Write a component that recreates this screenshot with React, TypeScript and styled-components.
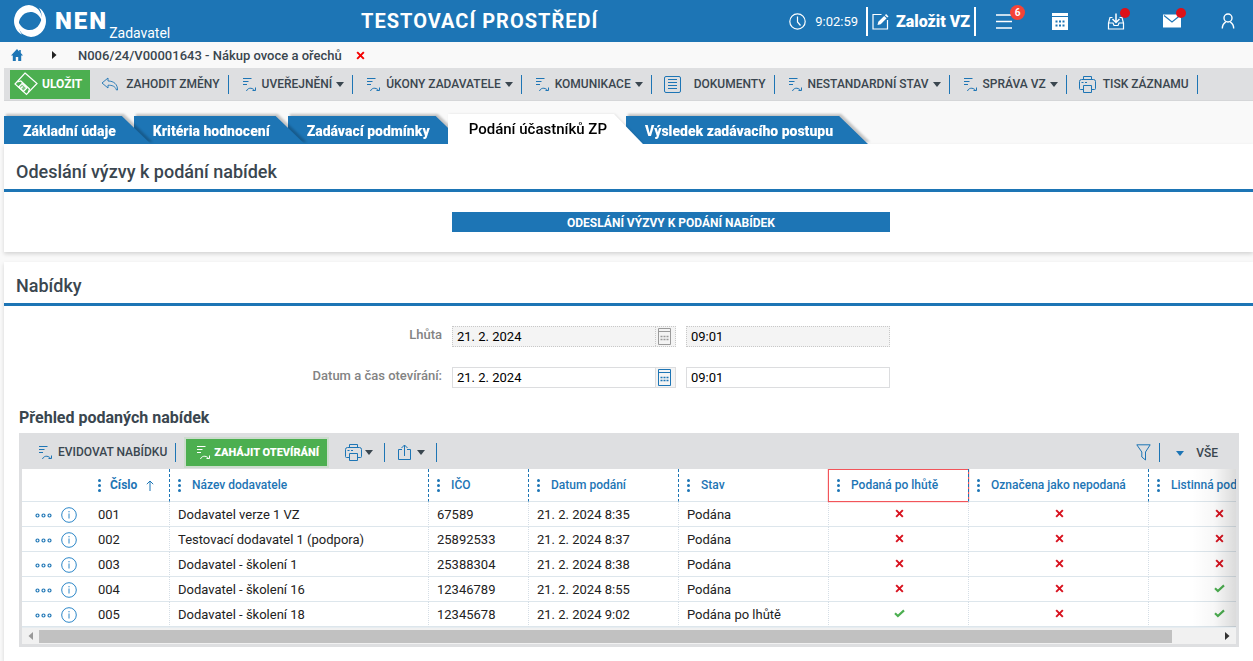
import React from 'react';
import styled, { createGlobalStyle, css } from 'styled-components';

const blue = '#1d75b5';
const ink = '#3a464f';
const green = '#4caf50';

const GlobalStyle = createGlobalStyle`
  * { box-sizing: border-box; }
  body {
    margin: 0;
    background: #f9f9f9;
    color: #222;
    font-family: Roboto, "Liberation Sans", sans-serif;
    font-size: 13px;
  }
  button, input { font-family: inherit; }
  button { border: 0; padding: 0; background: none; cursor: pointer; }
  svg { display: block; flex: none; }
`;

/* ---------- icons ---------- */

const LogoIcon = () => (
  <svg width="32" height="32" viewBox="0 0 32 32" aria-hidden="true">
    <path d="M15 0A15 16 0 0 0 .5 20C2 25 5 28.500 8 29.500 4.500 25 3.500 18 6.500 13 9 8.500 13 6.500 18 7 23 8 27 12 28 17 29 11 26 5 22 2.500A15 15 0 0 0 15 0Z" fill="#fff" />
    <path d="M17 32A15 16 0 0 0 31.500 12C30 7 28 4.500 25 3 28.500 8 28.500 14 25.500 19 23 23.500 19 25.500 14 25 9 24 5 20 4 15 3 21 5.500 27 10 29.800A15 15 0 0 0 17 32Z" fill="#fff" />
  </svg>
);

const ClockIcon = () => (
  <svg width="17" height="17" viewBox="0 0 17 17" fill="none" stroke="#fff" strokeWidth="1.200" aria-hidden="true">
    <circle cx="8.500" cy="8.500" r="7.700" />
    <path d="M8.500 3.500v5.500l3 3.500" />
  </svg>
);

const ComposeIcon = () => (
  <svg width="17" height="17" viewBox="0 0 17 17" fill="none" stroke="#fff" aria-hidden="true">
    <path d="M9.500 1.500H1v14.500h14.500V7" strokeWidth="1.200" />
    <path d="M5.500 12l.8-3.200 5.900-5.900 2.400 2.400-5.900 5.900z" fill="#fff" stroke="none" />
    <path d="M12.900 2.200l1.200-1.200 2.400 2.400-1.200 1.200z" fill="#fff" stroke="none" />
  </svg>
);

const MenuIcon = () => (
  <svg width="18" height="16" viewBox="0 0 18 16" stroke="#fff" strokeWidth="1.500" aria-hidden="true">
    <path d="M1 2h16M1 8.500h16M1 15h16" />
  </svg>
);

const CalendarSolidIcon = () => (
  <svg width="18" height="17" viewBox="0 0 18 17" aria-hidden="true">
    <path d="M1 0h16v3H1zM1 4h16v13H1z" fill="#fff" />
    <path d="M4.500 8.500h2M8 8.500h2M11.500 8.500h2M4.500 12.500h2M8 12.500h2M11.500 12.500h2" stroke={blue} strokeWidth="2" />
  </svg>
);

const InboxIcon = () => (
  <svg width="18" height="18" viewBox="0 0 18 18" fill="none" stroke="#fff" strokeWidth="1.200" aria-hidden="true">
    <path d="M5.500 5.500H3L1.500 11v6h15v-6L15 5.500h-2.500M1.500 11h4.500l1 2.500h4l1-2.500h4.500" />
    <path d="M9 1.500v9M5.500 7l3.500 3.500L12.500 7" strokeWidth="1.500" />
  </svg>
);

const MailIcon = () => (
  <svg width="18" height="14" viewBox="0 0 18 14" aria-hidden="true">
    <path d="M0 .5h18V13.500H0z" fill="#fff" />
    <path d="M1 1.500l8 6.500 8-6.500" fill="none" stroke={blue} strokeWidth="1.100" />
  </svg>
);

const UserIcon = () => (
  <svg width="16" height="16" viewBox="0 0 16 16" fill="none" stroke="#fff" strokeWidth="1.400" aria-hidden="true">
    <circle cx="8" cy="5" r="4" />
    <path d="M2.300 15.500c0-3 1.300-5.200 3.500-6.700M13.700 15.500c0-3-1.300-5.200-3.500-6.700" />
  </svg>
);

const HomeIcon = () => (
  <svg width="12" height="12" viewBox="0 0 12 12" fill={blue} aria-hidden="true">
    <path d="M6 0L0 6.500h1.800V12h3V8h2.400v4h3V6.500H12L9.800 4V1H8.200v1.400z" />
  </svg>
);

const CrossIcon = ({ color = '#d8121f', size = 9, label }: { color?: string; size?: number; label?: string }) => (
  <svg width={size} height={size} viewBox="0 0 10 10" stroke={color} strokeWidth="2.200" role="img" aria-label={label}>
    <path d="M1.300 1.300l7.400 7.400M8.700 1.300l-7.400 7.400" />
  </svg>
);

const CheckIcon = () => (
  <svg width="11" height="9" viewBox="0 0 12 10" fill="none" stroke={green} strokeWidth="2.400" role="img" aria-label="Ano">
    <path d="M1 4.800l3.200 3L11 1.500" />
  </svg>
);

const SaveTagIcon = () => (
  <svg width="24" height="24" viewBox="0 0 24 24" fill="none" stroke="#fff" strokeWidth="1.200" aria-hidden="true">
    <path d="M11 1L23 11.500 12.500 22.500 1 12z" />
    <path d="M3.500 9.800l3.300-.8 8.700 8-1.200 3.500" />
    <path d="M8 11.500l4.800 4.500-3.300 3.500-4.900-4.500z" fill="#fff" fillOpacity=".3" />
    <path d="M8.700 14.500l-2 2" />
  </svg>
);

const UndoIcon = () => (
  <svg width="18" height="14" viewBox="0 0 18 14" fill="none" stroke={blue} strokeWidth=".9" aria-hidden="true">
    <path d="M7 1L1 6l6 5V8.200c4 0 7.200.8 8.500 4.800h1c.2-5.500-3.500-9-9.500-9z" />
  </svg>
);

const ListActionIcon = ({ color = blue }: { color?: string }) => (
  <svg width="15" height="15" viewBox="0 0 15 15" fill="none" stroke={color} aria-hidden="true">
    <path d="M1 1.500h8.500M1 4.500h5.500M1 7.500h4" />
    <path d="M4.500 14c1-3 5-4 8-.8M13.500 10.500v3H10.500" />
  </svg>
);

const DocumentIcon = () => (
  <svg width="17" height="17" viewBox="0 0 17 17" fill="none" stroke={blue} aria-hidden="true">
    <rect x=".5" y=".5" width="16" height="16" rx="1.500" />
    <path d="M4 3.500h9M4 6.500h9M4 9.500h9M4 12.500h9" />
  </svg>
);

const PrintIcon = () => (
  <svg width="17" height="17" viewBox="0 0 17 17" fill="none" stroke={blue} aria-hidden="true">
    <path d="M4.500 3.500v-3h8v3M4.500 13.500H1.500q-1 0-1-1v-7q0-2 2-2h12q2 0 2 2v7q0 1-1 1h-3" />
    <path d="M4.500 9.500h8v7h-8z" />
    <path d="M2.500 6.500h2M6 6.500h2" />
  </svg>
);

const ShareIcon = () => (
  <svg width="15" height="16" viewBox="0 0 15 16" fill="none" stroke={blue} aria-hidden="true">
    <path d="M5 5.500H1.500v10h12v-10h-3.500M7.500 12V1M4.500 4l3-3 3 3" />
  </svg>
);

const FilterIcon = () => (
  <svg width="15" height="17" viewBox="0 0 15 17" fill="none" stroke={blue} aria-hidden="true">
    <path d="M.8.8h13.400L9.500 8v8L5.800 13V8z" />
  </svg>
);

const CaretIcon = ({ color = ink }: { color?: string }) => (
  <svg width="8" height="5" viewBox="0 0 8 5" fill={color} aria-hidden="true">
    <path d="M0 0h8L4 5z" />
  </svg>
);

const PointerIcon = ({ left, color = '#333' }: { left?: boolean; color?: string }) => (
  <svg width="5" height="8" viewBox="0 0 5 8" fill={color} aria-hidden="true">
    <path d={left ? 'M5 0v8L.5 4z' : 'M0 0v8l4.500-4z'} />
  </svg>
);

const CalendarIcon = ({ color }: { color: string }) => (
  <svg width="15" height="17" viewBox="0 0 15 17" fill="none" stroke={color} aria-hidden="true">
    <path d="M1.500 .5v16h12V.5zM1 3.500h13" />
    <path d="M3.500 8.500h2M6.500 8.500h2M9.500 8.500h2M3.500 11.500h2M6.500 11.500h2M9.500 11.500h2" strokeWidth="1.500" />
  </svg>
);

const DotsIcon = () => (
  <svg width="3" height="13" viewBox="0 0 3 13" fill={blue} aria-hidden="true">
    <circle cx="1.500" cy="1.500" r="1.500" />
    <circle cx="1.500" cy="6.500" r="1.500" />
    <circle cx="1.500" cy="11.500" r="1.500" />
  </svg>
);

const RowMenuIcon = () => (
  <svg width="17" height="5" viewBox="0 0 17 5" fill="none" stroke={blue} strokeWidth="1.200" aria-hidden="true">
    <circle cx="2.500" cy="2.500" r="1.500" />
    <circle cx="8.500" cy="2.500" r="1.500" />
    <circle cx="14.500" cy="2.500" r="1.500" />
  </svg>
);

const InfoIcon = () => (
  <svg width="16" height="16" viewBox="0 0 16 16" fill="none" stroke="#2b86c8" aria-hidden="true">
    <circle cx="8" cy="8" r="7.300" />
    <path d="M8 6.500v5M8 4v1.300" />
  </svg>
);

const SortIcon = () => (
  <svg width="8" height="11" viewBox="0 0 8 11" fill="none" stroke={blue} aria-hidden="true">
    <path d="M4 11V1M.8 4.200L4 1l3.200 3.200" />
  </svg>
);

/* ---------- page header ---------- */

const Header = styled.header`
  display: flex;
  align-items: center;
  height: 42px;
  padding: 0 9px 0 14px;
  background: ${blue};
  color: #fff;
`;

const Brand = styled.a`
  display: flex;
  align-items: center;
  height: 42px;
  color: inherit;
  text-decoration: none;
`;

const BrandName = styled.span`
  margin-left: 9px;
  font-size: 24px;
  line-height: 40px;
  font-weight: 900;
  letter-spacing: 2px;
`;

const BrandRole = styled.span`
  align-self: flex-end;
  margin-left: 1px;
  font-size: 14px;
  line-height: 18px;
`;

const EnvTitle = styled.h1`
  flex: 1;
  margin: 0;
  font-size: 20px;
  line-height: 40px;
  font-weight: 700;
  letter-spacing: 1px;
  text-align: center;
  white-space: nowrap;
`;

const Clock = styled.time`
  display: flex;
  align-items: center;
  gap: 9px;
  margin-right: 8px;
  font-size: 13px;
`;

const CreateButton = styled.button`
  display: flex;
  align-items: center;
  gap: 7px;
  height: 29px;
  padding: 0 4px;
  border: solid #fff;
  border-width: 0 2px;
  color: #fff;
  font-size: 16px;
  font-weight: 900;
  white-space: nowrap;
`;

const HeaderNav = styled.nav`
  display: flex;
  gap: 24px;
  margin-left: 12px;
`;

const HeaderIconButton = styled.button`
  position: relative;
  display: grid;
  place-items: center;
  width: 32px;
  height: 32px;
`;

const CountBadge = styled.span`
  position: absolute;
  top: 0;
  right: -5px;
  width: 15px;
  height: 15px;
  border-radius: 50%;
  background: #f44336;
  color: #fff;
  font-size: 10px;
  line-height: 15px;
  font-weight: 700;
  text-align: center;
`;

const DotBadge = styled.span`
  position: absolute;
  top: 3px;
  right: 2px;
  width: 10px;
  height: 10px;
  border-radius: 50%;
  background: #dd1119;
`;

/* ---------- breadcrumb ---------- */

const Breadcrumb = styled.nav`
  display: flex;
  align-items: center;
  height: 26px;
  padding-left: 11px;
  color: ${ink};
  font-size: 13px;
  font-weight: 500;
`;

const HomeLink = styled.a`
  margin-right: 29px;
`;

const RecordName = styled.span`
  margin: 0 14px 0 21px;
`;

/* ---------- toolbars ---------- */

const RecordToolbar = styled.div`
  display: flex;
  align-items: center;
  height: 33px;
  margin-left: 4px;
  padding-left: 6px;
  border-bottom: 1px solid #d5d6d8;
  background: #dedfe1;
`;

const toolbarText = css`
  color: ${ink};
  font-size: 12px;
  line-height: 19px;
  font-weight: 500;
  white-space: nowrap;
`;

const PrimaryButton = styled.button<{ $glow?: boolean }>`
  display: flex;
  align-items: center;
  height: ${p => (p.$glow ? 27 : 29)}px;
  padding: ${p => (p.$glow ? '0 8px 0 10px' : '0 8px 0 4px')};
  gap: ${p => (p.$glow ? 3 : 4)}px;
  background: ${green};
  box-shadow: ${p => (p.$glow ? '0 0 0 2px #ccdccd' : 'none')};
  color: #fff;
  font-size: ${p => (p.$glow ? 11 : 12)}px;
  font-weight: ${p => (p.$glow ? 900 : 700)};
  white-space: nowrap;
`;

const ToolButton = styled.button<{ $gap?: number; $lead?: number; $tail?: number }>`
  display: flex;
  align-items: center;
  gap: ${p => p.$gap ?? 5}px;
  height: 19px;
  padding-left: ${p => p.$lead ?? 13}px;
  padding-right: ${p => p.$tail ?? 8}px;
  border-right: 1px solid ${blue};
  ${toolbarText}
`;

const WithCaret = styled.span`
  display: flex;
  align-items: center;
  gap: 4px;
`;

/* ---------- tabs ---------- */

const TabBar = styled.div`
  display: flex;
  align-items: flex-end;
  height: 43px;
  padding-left: 4px;
  overflow: hidden;
`;

const TabWrap = styled.div<{ $order: number; $active?: boolean }>`
  position: relative;
  z-index: ${p => p.$order};
  margin-right: -17px;
  filter: ${p => (p.$active ? 'drop-shadow(1px 0 1px rgba(0, 0, 0, 0.1))' : 'drop-shadow(2px -2px 1px rgba(0, 0, 0, 0.22))')};
`;

const Tab = styled.button<{ $active?: boolean }>`
  display: block;
  height: ${p => (p.$active ? 30 : 28)}px;
  padding: ${p => (p.$active ? '0 36px 0 21px' : '0 35px 0 19px')};
  background: ${p => (p.$active ? '#fff' : blue)};
  clip-path: polygon(0 0, calc(100% - 29px) 0, 100% 100%, 0 100%);
  color: ${p => (p.$active ? '#000' : '#fff')};
  font-size: ${p => (p.$active ? 15 : 14)}px;
  line-height: 30px;
  font-weight: ${p => (p.$active ? 500 : 900)};
  white-space: nowrap;
`;

/* ---------- cards and form ---------- */

const Card = styled.section`
  margin: 0 0 10px 4px;
  background: #fff;
  box-shadow: 0 2px 4px rgba(0, 0, 0, 0.15);

  &:last-child {
    margin-bottom: 0;
    padding-bottom: 14px;
  }
`;

const CardTitle = styled.h2<{ $first?: boolean }>`
  margin: 0;
  padding: ${p => (p.$first ? 16 : 12)}px 12px 5px;
  border-bottom: 3px solid ${blue};
  color: ${ink};
  font-size: 18px;
  line-height: 24px;
  font-weight: 500;
`;

const FormGrid = styled.div`
  display: grid;
  grid-template-columns: minmax(0, 438px) minmax(0, 438px);
  column-gap: 10px;
  row-gap: 20px;
  padding: 20px 0;
`;

const WideButton = styled.button`
  grid-column: 2;
  height: 20px;
  background: ${blue};
  color: #fff;
  font-size: 12px;
  line-height: 22px;
  font-weight: 700;
`;

const FieldLabel = styled.label`
  color: #838383;
  font-size: 13px;
  line-height: 18px;
  font-weight: 500;
  text-align: right;
`;

const FieldPair = styled.div`
  display: grid;
  grid-template-columns: 224fr 204fr;
  gap: 10px;
`;

const FieldBox = styled.div<{ $disabled?: boolean }>`
  display: flex;
  height: 21px;
  border: 1px ${p => (p.$disabled ? 'dotted #c8c8c8' : 'solid #dcdddf')};
  background: ${p => (p.$disabled ? '#f4f4f4' : '#fff')};
`;

const FieldInput = styled.input`
  flex: 1;
  min-width: 0;
  padding: 0 4px;
  border: 0;
  background: none;
  color: #000;
  font-size: 13px;
  line-height: 19px;
`;

const PickerButton = styled.button`
  display: grid;
  place-items: center start;
  width: 20px;
  padding-left: 1px;
  border-left: inherit;
  background: #f4f4f4;
`;

/* ---------- data grid ---------- */

const GridHeading = styled.h3`
  margin: 0 15px;
  color: ${ink};
  font-size: 16px;
  line-height: 20px;
  font-weight: 700;
`;

const GridFrame = styled.div`
  margin: 5px 14px 0 15px;
  border: solid #dedfe1;
  border-width: 0 3px 3px;
  background: #fff;
`;

const GridToolbar = styled.div`
  display: flex;
  align-items: center;
  height: 36px;
  padding: 2px 18px 0 3px;
  background: #dedfe1;
`;

const ToolbarGap = styled.span<{ $grow?: boolean }>`
  flex: ${p => (p.$grow ? '1' : '0 0 10px')};
`;

const ViewButton = styled.button`
  display: flex;
  align-items: center;
  gap: 12px;
  padding: 2px 0 0 16px;
  ${toolbarText}
`;

const TableClip = styled.div`
  position: relative;
  overflow: hidden;

  &::after {
    content: '';
    position: absolute;
    inset: 0 0 0 auto;
    width: 44px;
    background: linear-gradient(to right, transparent, rgba(0, 0, 0, 0.03) 50%, rgba(0, 0, 0, 0.14));
  }
`;

const DataTable = styled.table`
  width: 1267px;
  table-layout: fixed;
  border-collapse: separate;
  border-spacing: 0;
`;

const HeadCell = styled.th<{ $divided?: boolean; $marked?: boolean }>`
  position: relative;
  height: 33px;
  padding: 0 0 0 8px;
  border-bottom: 1px solid #dde6ec;
  border-left: ${p => (p.$divided ? `1px dashed ${blue}` : '0')};
  text-align: left;
  ${p =>
    p.$marked &&
    css`
      &::after {
        content: '';
        position: absolute;
        inset: 0 -1px -1px -1px;
        border: 1px solid #f2555a;
        box-shadow: 0 0 1px #f2555a;
      }
    `}
`;

const HeadButton = styled.button<{ $sorted?: boolean }>`
  display: flex;
  align-items: center;
  gap: ${p => (p.$sorted ? 9 : 11)}px;
  color: ${blue};
  font-size: 12px;
  line-height: 20px;
  font-weight: ${p => (p.$sorted ? 700 : 500)};
  white-space: nowrap;
`;

const Cell = styled.td<{ $divided?: boolean }>`
  height: 25px;
  padding: 2px 0 0 8px;
  border-bottom: 1px solid #dde6ec;
  border-left: ${p => (p.$divided ? '1px dotted #d5dee6' : '0')};
  color: #222;
  font-size: 13px;
  line-height: 22px;
  white-space: nowrap;
`;

const RowTools = styled.div`
  display: flex;
  align-items: center;
  gap: 9px;
  height: 22px;
  padding-left: 5px;
`;

const StatusMark = styled.div`
  display: grid;
  place-items: center;
  height: 22px;
  padding: 0 7px 3px 0;
`;

const ScrollBar = styled.div`
  display: flex;
  align-items: center;
  height: 17px;
  border-top: 1px solid #e6ecf0;
  background: #f1f1f1;
`;

const ScrollArrow = styled.button`
  display: grid;
  place-items: center;
  width: 17px;
  height: 16px;
`;

const ScrollTrack = styled.div`
  flex: 1;
  height: 13px;
`;

const ScrollThumb = styled.div`
  width: 96%;
  height: 13px;
  background: #c1c1c1;
`;

const actions: { label: string; icon: React.ReactNode; caret?: boolean; gap?: number; lead?: number }[] = [
  { label: 'ZAHODIT ZMĚNY', icon: <UndoIcon />, gap: 7, lead: 11 },
  { label: 'UVEŘEJNĚNÍ', icon: <ListActionIcon />, caret: true },
  { label: 'ÚKONY ZADAVATELE', icon: <ListActionIcon />, caret: true },
  { label: 'KOMUNIKACE', icon: <ListActionIcon />, caret: true },
  { label: 'DOKUMENTY', icon: <DocumentIcon />, gap: 13, lead: 12 },
  { label: 'NESTANDARDNÍ STAV', icon: <ListActionIcon />, caret: true },
  { label: 'SPRÁVA VZ', icon: <ListActionIcon />, caret: true },
  { label: 'TISK ZÁZNAMU', icon: <PrintIcon />, gap: 7, lead: 12 },
];

const tabs = ['Základní údaje', 'Kritéria hodnocení', 'Zadávací podmínky', 'Podání účastníků ZP', 'Výsledek zadávacího postupu'];
const activeTab = 3;

const columns = [
  { title: 'Číslo', width: 79, sorted: true },
  { title: 'Název dodavatele', width: 259 },
  { title: 'IČO', width: 100 },
  { title: 'Datum podání', width: 150 },
  { title: 'Stav', width: 150 },
  { title: 'Podaná po lhůtě', width: 140, marked: true },
  { title: 'Označena jako nepodaná', width: 180 },
  { title: 'Listinná podoba', width: 141 },
];

const offers = [
  { cells: ['001', 'Dodavatel verze 1 VZ', '67589', '21. 2. 2024 8:35', 'Podána'], flags: [false, false, false] },
  { cells: ['002', 'Testovací dodavatel 1 (podpora)', '25892533', '21. 2. 2024 8:37', 'Podána'], flags: [false, false, false] },
  { cells: ['003', 'Dodavatel - školení 1', '25388304', '21. 2. 2024 8:38', 'Podána'], flags: [false, false, false] },
  { cells: ['004', 'Dodavatel - školení 16', '12346789', '21. 2. 2024 8:55', 'Podána'], flags: [false, false, true] },
  { cells: ['005', 'Dodavatel - školení 18', '12345678', '21. 2. 2024 9:02', 'Podána po lhůtě'], flags: [true, false, true] },
];

const DateTimeRow = ({ id, label, disabled }: { id: string; label: string; disabled?: boolean }) => (
  <>
    <FieldLabel htmlFor={id}>{label}</FieldLabel>
    <FieldPair>
      <FieldBox $disabled={disabled}>
        <FieldInput id={id} defaultValue="21. 2. 2024" disabled={disabled} />
        <PickerButton aria-label="Vybrat datum" disabled={disabled}>
          <CalendarIcon color={disabled ? '#9a9a9a' : blue} />
        </PickerButton>
      </FieldBox>
      <FieldBox $disabled={disabled}>
        <FieldInput aria-label={`${label} čas`} defaultValue="09:01" disabled={disabled} />
      </FieldBox>
    </FieldPair>
  </>
);

export default function App() {
  return (
    <>
      <GlobalStyle />
      <Header>
        <Brand href="#">
          <LogoIcon />
          <BrandName>NEN</BrandName>
          <BrandRole>Zadavatel</BrandRole>
        </Brand>
        <EnvTitle>TESTOVACÍ PROSTŘEDÍ</EnvTitle>
        <Clock><ClockIcon />9:02:59</Clock>
        <CreateButton><ComposeIcon />Založit VZ</CreateButton>
        <HeaderNav>
          <HeaderIconButton aria-label="Nabídka"><MenuIcon /><CountBadge>6</CountBadge></HeaderIconButton>
          <HeaderIconButton aria-label="Kalendář"><CalendarSolidIcon /></HeaderIconButton>
          <HeaderIconButton aria-label="Doručené"><InboxIcon /><DotBadge /></HeaderIconButton>
          <HeaderIconButton aria-label="Zprávy"><MailIcon /><DotBadge /></HeaderIconButton>
          <HeaderIconButton aria-label="Uživatel"><UserIcon /></HeaderIconButton>
        </HeaderNav>
      </Header>

      <Breadcrumb>
        <HomeLink href="#" aria-label="Domů"><HomeIcon /></HomeLink>
        <PointerIcon color="#222" />
        <RecordName>N006/24/V00001643 - Nákup ovoce a ořechů</RecordName>
        <button aria-label="Zavřít"><CrossIcon color="#f40000" /></button>
      </Breadcrumb>

      <RecordToolbar>
        <PrimaryButton><SaveTagIcon />ULOŽIT</PrimaryButton>
        {actions.map(a => (
          <ToolButton key={a.label} $gap={a.gap} $lead={a.lead}>
            {a.icon}
            <WithCaret>{a.label}{a.caret && <CaretIcon />}</WithCaret>
          </ToolButton>
        ))}
      </RecordToolbar>

      <TabBar role="tablist">
        {tabs.map((t, i) => (
          <TabWrap key={t} $order={i === activeTab ? 10 : 9 - i} $active={i === activeTab}>
            <Tab role="tab" aria-selected={i === activeTab} $active={i === activeTab}>{t}</Tab>
          </TabWrap>
        ))}
      </TabBar>

      <Card>
        <CardTitle $first>Odeslání výzvy k podání nabídek</CardTitle>
        <FormGrid>
          <WideButton>ODESLÁNÍ VÝZVY K PODÁNÍ NABÍDEK</WideButton>
        </FormGrid>
      </Card>

      <Card>
        <CardTitle>Nabídky</CardTitle>
        <FormGrid>
          <DateTimeRow id="deadline" label="Lhůta" disabled />
          <DateTimeRow id="opening" label="Datum a čas otevírání:" />
        </FormGrid>
        <GridHeading>Přehled podaných nabídek</GridHeading>
        <GridFrame>
          <GridToolbar>
            <ToolButton><ListActionIcon />EVIDOVAT NABÍDKU</ToolButton>
            <ToolbarGap />
            <PrimaryButton $glow><ListActionIcon color="#fff" />ZAHÁJIT OTEVÍRÁNÍ</PrimaryButton>
            <ToolButton aria-label="Tisk" $lead={18} $gap={3} $tail={11}><PrintIcon /><CaretIcon /></ToolButton>
            <ToolButton aria-label="Export" $lead={12} $tail={11}><ShareIcon /><CaretIcon /></ToolButton>
            <ToolbarGap $grow />
            <ToolButton aria-label="Filtr"><FilterIcon /></ToolButton>
            <ViewButton><CaretIcon color={blue} />VŠE</ViewButton>
          </GridToolbar>
          <TableClip>
            <DataTable>
              <colgroup>
                <col width="68" />
                {columns.map(c => <col key={c.title} width={c.width} />)}
              </colgroup>
              <thead>
                <tr>
                  <HeadCell aria-label="Akce" />
                  {columns.map((c, i) => (
                    <HeadCell key={c.title} $divided={i > 0} $marked={c.marked}>
                      <HeadButton $sorted={c.sorted}>
                        <DotsIcon />{c.title}{c.sorted && <SortIcon />}
                      </HeadButton>
                    </HeadCell>
                  ))}
                </tr>
              </thead>
              <tbody>
                {offers.map(o => (
                  <tr key={o.cells[0]}>
                    <Cell>
                      <RowTools>
                        <button aria-label="Akce řádku"><RowMenuIcon /></button>
                        <button aria-label="Informace"><InfoIcon /></button>
                      </RowTools>
                    </Cell>
                    {o.cells.map((c, i) => <Cell key={i} $divided={i > 0}>{c}</Cell>)}
                    {o.flags.map((f, i) => (
                      <Cell key={i} $divided>
                        <StatusMark>{f ? <CheckIcon /> : <CrossIcon label="Ne" />}</StatusMark>
                      </Cell>
                    ))}
                  </tr>
                ))}
              </tbody>
            </DataTable>
          </TableClip>
          <ScrollBar>
            <ScrollArrow aria-label="Posunout vlevo"><PointerIcon left color="#999" /></ScrollArrow>
            <ScrollTrack><ScrollThumb /></ScrollTrack>
            <ScrollArrow aria-label="Posunout vpravo"><PointerIcon /></ScrollArrow>
          </ScrollBar>
        </GridFrame>
      </Card>
    </>
  );
}
